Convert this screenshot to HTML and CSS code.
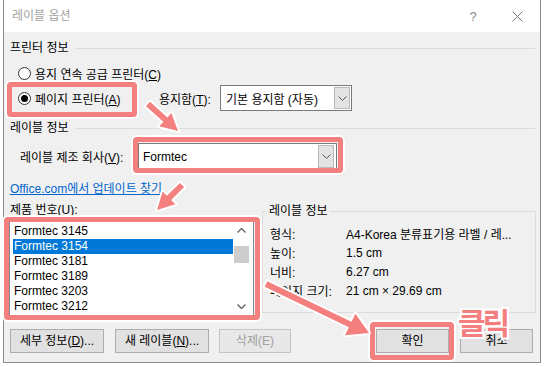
FILE: index.html
```html
<!DOCTYPE html>
<html lang="ko">
    <head>
        <meta charset="UTF-8" />
        <meta name="viewport" content="width=device-width, initial-scale=1.0" />
        <link rel="stylesheet" href="styles.css">
        <title>레이블 옵션</title>
    </head>
    <body>
        <div class="screen">
            <div class="window">
                <!-- 제목 표시줄 -->
                <div class="titlebar">
                    <span class="title">레이블 옵션</span>
                    <span class="help">?</span>
                    <span class="close">
                        <svg width="11" height="11" viewBox="0 0 11 11">
                            <path d="M0.5 0.5 L10.5 10.5 M10.5 0.5 L0.5 10.5" stroke="#7a7a7a" stroke-width="1" fill="none" />
                        </svg>
                    </span>
                </div>

                <div class="content">
                    <div class="group-head">프린터 정보</div>
                    <div class="option-row">
                        <span class="radio"></span>
                        <span>용지 연속 공급 프린터(<u>C</u>)</span>
                    </div>
                    <div class="option-row paper-row">
                        <span class="radio on"></span>
                        <span class="option-text">페이지 프린터(<u>A</u>)</span>
                        <span class="tray-label">용지함(<u>T</u>):</span>
                        <div class="select tray">
                            <span class="value">기본 용지함 (자동)</span>
                            <span class="drop">
                                <svg width="9" height="5" viewBox="0 0 9 5"><path d="M0.5 0.5 L4.5 4.5 L8.5 0.5" stroke="#555" fill="none" /></svg>
                            </span>
                        </div>
                    </div>

                    <div class="group-head second">레이블 정보</div>
                    <div class="maker-row">
                        <span class="maker-label">레이블 제조 회사(<u>V</u>):</span>
                        <div class="select maker">
                            <span class="value">Formtec</span>
                            <span class="drop">
                                <svg width="9" height="5" viewBox="0 0 9 5"><path d="M0.5 0.5 L4.5 4.5 L8.5 0.5" stroke="#555" fill="none" /></svg>
                            </span>
                        </div>
                    </div>
                    <span class="link">Office.com에서 업데이트 찾기</span>

                    <div class="lower">
                        <div class="product">
                            <span class="product-label">제품 번호(<u>U</u>):</span>
                            <div class="list">
                                <ul class="rows">
                                    <li>Formtec 3145</li>
                                    <li class="selected">Formtec 3154</li>
                                    <li>Formtec 3181</li>
                                    <li>Formtec 3189</li>
                                    <li>Formtec 3203</li>
                                    <li>Formtec 3212</li>
                                </ul>
                                <div class="scroll">
                                    <span class="arrow">
                                        <svg width="9" height="5" viewBox="0 0 9 5"><path d="M0.5 4.5 L4.5 0.5 L8.5 4.5" stroke="#606060" stroke-width="1.3" fill="none" /></svg>
                                    </span>
                                    <span class="thumb"></span>
                                    <span class="arrow down">
                                        <svg width="9" height="5" viewBox="0 0 9 5"><path d="M0.5 0.5 L4.5 4.5 L8.5 0.5" stroke="#606060" stroke-width="1.3" fill="none" /></svg>
                                    </span>
                                </div>
                            </div>
                        </div>

                        <div class="info">
                            <span class="info-title">레이블 정보</span>
                            <div class="info-grid">
                                <span>형식:</span><span class="val">A4-Korea 분류표기용 라벨 / 레...</span>
                                <span>높이:</span><span class="val">1.5 cm</span>
                                <span>너비:</span><span class="val">6.27 cm</span>
                                <span>페이지 크기:</span><span class="val">21 cm × 29.69 cm</span>
                            </div>
                        </div>
                    </div>

                    <div class="buttons">
                        <span class="btn detail">세부 정보(<u>D</u>)...</span>
                        <span class="btn new">새 레이블(<u>N</u>)...</span>
                        <span class="btn remove">삭제(E)</span>
                        <span class="btn ok">확인</span>
                        <span class="btn cancel">취소</span>
                    </div>
                </div>
            </div>

            <!-- 강조 표시 (주석) -->
            <div class="mark mark-radio"></div>
            <div class="mark mark-maker"></div>
            <div class="mark mark-list"></div>
            <div class="mark mark-ok"></div>

            <svg class="arrows" width="544" height="367" viewBox="0 0 544 367">
                <polygon points="145.99,106.23 163.36,121.86 159.35,126.32 178,131 171.39,112.94 167.38,117.40 150.01,101.77" />
                <polygon points="179.88,182.88 166.90,195.86 162.66,191.62 157,210 175.38,204.34 171.14,200.10 184.12,187.12" />
                <polygon points="264.70,286.70 348.88,327.17 344.98,335.28 369,333 355.38,313.66 351.48,321.77 267.30,281.30" />
            </svg>
            <div class="click-note">클릭</div>
        </div>
    </body>
</html>
```

FILE: styles.css
```css
/* 기본 스타일 */
html,
body {
    margin: 0;
    padding: 0;
    width: 100%;
    height: 100%;
    overflow: hidden;
    background: #ffffff;
    font-family: "Liberation Sans", "Noto Sans CJK KR", sans-serif;
    font-size: 12px;
    color: #000;
}

.screen {
    position: relative;
    width: 544px;
    height: 367px;
}

/* 대화 상자 */
.window {
    margin-left: 3px;
    width: 538px;
    height: 363px;
    box-sizing: border-box;
    border: 1px solid #8c8c8c;
    border-top: none;
    background: #f0f0f0;
    display: flex;
    flex-direction: column;
}

.titlebar {
    flex: none;
    height: 32px;
    background: #fff;
    display: flex;
    align-items: center;
    padding-left: 8px;
}

.title {
    flex: 1;
    color: #a3a3a3;
    line-height: 16px;
}

.help {
    width: 20px;
    margin-right: 11px;
    text-align: center;
    color: #8a8a8a;
    font-size: 13px;
}

.close {
    width: 46px;
    display: flex;
    justify-content: center;
}

.content {
    flex: 1;
    padding: 0 4px 0 6px;
    display: flex;
    flex-direction: column;
}

/* 그룹 제목 + 구분선 */
.group-head {
    margin-top: 8px;
    margin-right: 1px;
    display: flex;
    align-items: center;
    gap: 6px;
    line-height: 16px;
}

.group-head::after {
    content: "";
    flex: 1;
    height: 1px;
    background: #dcdcdc;
}

.group-head.second {
    margin-top: 9px;
}

.option-row {
    margin-top: 7px;
    height: 20px;
    display: flex;
    align-items: center;
    padding-left: 8px;
}

.paper-row {
    margin-top: 2px;
    height: 26px;
}

.radio {
    width: 13px;
    height: 13px;
    box-sizing: border-box;
    border: 1px solid #333;
    border-radius: 50%;
    background: #fff;
    margin-right: 4px;
    display: flex;
    align-items: center;
    justify-content: center;
}

.radio.on::after {
    content: "";
    width: 7px;
    height: 7px;
    border-radius: 50%;
    background: #000;
}

.option-text {
    width: 124px;
}

.tray-label {
    width: 61px;
}

/* 콤보 상자 */
.select {
    box-sizing: border-box;
    border: 1px solid #7a7a7a;
    background: #fff;
    display: flex;
    align-items: center;
}

.select .value {
    flex: 1;
    padding-left: 5px;
}

.select .drop {
    align-self: stretch;
    width: 16px;
    margin: 1px;
    box-sizing: border-box;
    background: #e3e3e3;
    border: 1px solid #b9b9b9;
    display: flex;
    align-items: center;
    justify-content: center;
}

.tray {
    width: 132px;
    height: 26px;
}

.maker-row {
    margin-top: 7px;
    height: 27px;
    display: flex;
    align-items: center;
    padding-left: 10px;
}

.maker-label {
    width: 118px;
}

.maker {
    width: 199px;
    height: 27px;
}

.maker .value {
    padding-left: 4px;
}

.maker .drop {
    margin: 1px 2px 1px 1px;
}

.link {
    margin-top: 11px;
    align-self: flex-start;
    line-height: 16px;
    color: #0066cc;
    text-decoration: underline;
}

/* 제품 목록 + 레이블 정보 */
.lower {
    margin-top: 5px;
    display: flex;
    height: 114px;
}

.product {
    width: 245px;
    flex: none;
    margin-left: -1px;
    display: flex;
    flex-direction: column;
}

.product-label {
    line-height: 16px;
    padding-left: 1px;
}

.list {
    margin-top: 3px;
    height: 95px;
    box-sizing: border-box;
    border: 1px solid #828790;
    background: #fff;
    display: flex;
    padding-right: 3px;
}

.rows {
    flex: 1;
    list-style: none;
    margin: 0;
    padding: 2px 0 0 3px;
}

.rows li {
    height: 15px;
    line-height: 15px;
    padding-left: 1px;
}

.rows li.selected {
    background: #0078d7;
    color: #fff;
}

.scroll {
    width: 17px;
    display: flex;
    flex-direction: column;
}

.scroll .arrow {
    height: 17px;
    display: flex;
    align-items: center;
    justify-content: center;
}

.scroll .thumb {
    margin: 7px 1px 0;
    height: 17px;
    background: #cdcdcd;
}

.scroll .down {
    margin-top: auto;
}

/* 레이블 정보 그룹 상자 */
.info {
    flex: none;
    margin: 9px 0 0 8px;
    padding: 12px 0 12px 7px;
    width: 274px;
    box-sizing: border-box;
    border: 1px solid #dcdcdc;
    align-self: flex-start;
    position: relative;
}

.info-title {
    position: absolute;
    left: 4px;
    top: -9px;
    padding: 0 2px;
    line-height: 16px;
    background: #f0f0f0;
}

.info-grid {
    display: grid;
    grid-template-columns: 76px 1fr;
    grid-auto-rows: 19px;
    align-items: center;
}

.info-grid .val {
    white-space: nowrap;
    overflow: hidden;
}

/* 하단 버튼 */
.buttons {
    margin-top: 13px;
    padding-right: 3px;
    display: flex;
}

.btn {
    height: 24px;
    box-sizing: border-box;
    border: 1px solid #adadad;
    background: #e1e1e1;
    line-height: 22px;
    text-align: center;
}

.detail {
    width: 94px;
}

.new {
    width: 94px;
    margin-left: 11px;
}

.remove {
    width: 72px;
    margin-left: 10px;
    color: #a0a0a0;
    background: #e8e8e8;
    border-color: #c4c4c4;
}

.ok {
    width: 73px;
    margin-left: auto;
}

.cancel {
    width: 73px;
    margin-left: 11px;
}

/* 강조 표시 */
.mark {
    position: absolute;
    box-sizing: border-box;
    border: 5px solid #f47f7f;
    border-radius: 4px;
    box-shadow: 0 0 0 2px #fff;
}

.mark-radio {
    left: 7px;
    top: 82px;
    width: 130px;
    height: 35px;
}

.mark-maker {
    left: 133px;
    top: 137px;
    width: 210px;
    height: 36px;
}

.mark-list {
    left: 4px;
    top: 217px;
    width: 256px;
    height: 103px;
}

.mark-ok {
    left: 370px;
    top: 322px;
    width: 84px;
    height: 38px;
}

.arrows {
    position: absolute;
    left: 0;
    top: 0;
    pointer-events: none;
}

.arrows polygon {
    fill: #f47f7f;
    stroke: #fff;
    stroke-width: 4px;
    stroke-linejoin: round;
    paint-order: stroke;
}

.click-note {
    position: absolute;
    left: 458px;
    top: 305px;
    font-family: "Noto Sans CJK KR", sans-serif;
    font-size: 30px;
    font-weight: 700;
    line-height: 32px;
    letter-spacing: -3px;
    color: #f47f7f;
    text-shadow:
        2px 0 0 #fff, -2px 0 0 #fff, 0 2px 0 #fff, 0 -2px 0 #fff,
        2px 2px 0 #fff, -2px -2px 0 #fff, 2px -2px 0 #fff, -2px 2px 0 #fff;
}
```
